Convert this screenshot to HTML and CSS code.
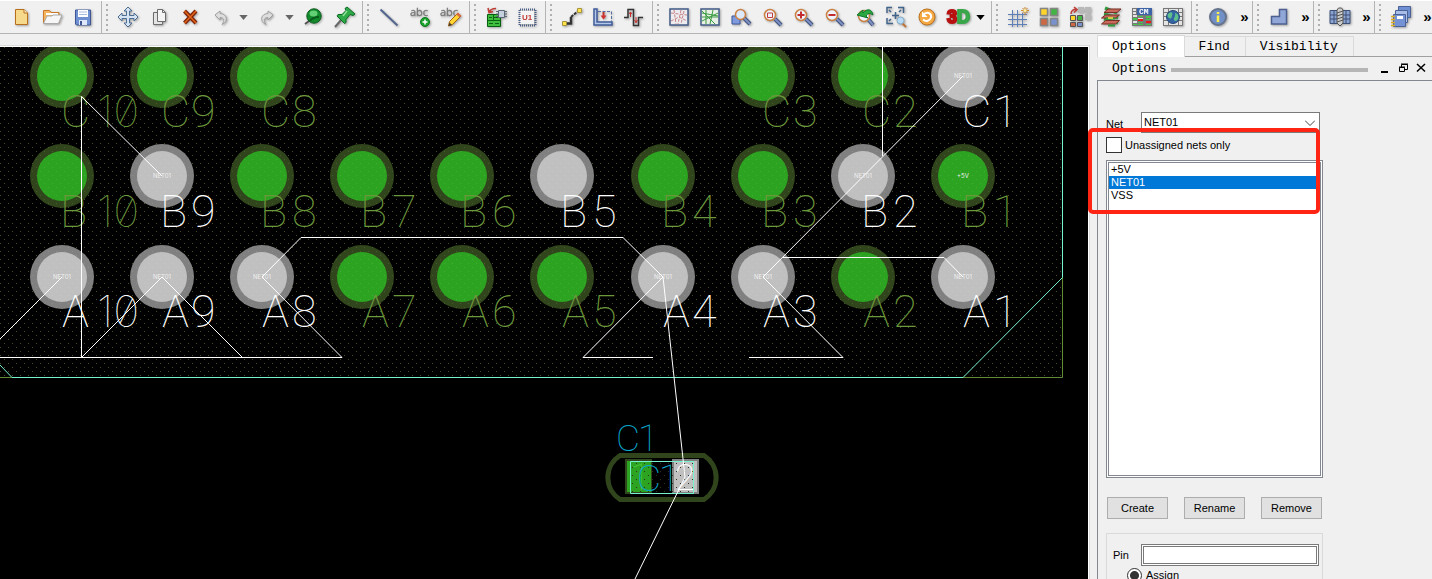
FILE: index.html
```html
<!DOCTYPE html>
<html lang="en">
<head>
<meta charset="utf-8">
<title>PCB Editor</title>
<link rel="stylesheet" href="styles.css">
</head>
<body>
<div class="toolbar" role="toolbar">
  <div class="group first">
    <button class="tool" aria-label="New"><svg viewBox="0 0 24 24"><path d="M6.500 4.500h8.500l3.500 3.500v11.500h-12z" fill="#f7d98b" stroke="#b86f1c"/><path d="M15 4.500v3.500h3.500" fill="#fff3cf" stroke="#b86f1c"/></svg></button>
    <button class="tool" aria-label="Open"><svg viewBox="0 0 24 24"><path d="M3.500 18V5.500h6l1.500 2h8v10.500z" fill="#f5b560" stroke="#c87a2a"/><path d="M6 9h12" stroke="#fff" stroke-width="2"/><path d="M7 11h5l1-1h9l-3.500 8.500h-15z" fill="#f6f6f6" stroke="#a9a9a9"/></svg></button>
    <button class="tool" aria-label="Save"><svg viewBox="0 0 24 24"><path d="M4.500 5h15v15h-14l-1-1z" fill="#6e8fd0" stroke="#3e5695"/><path d="M7 5h10v7H7z" fill="#fff"/><path d="M8 7h8M8 9.500h8" stroke="#a9bde2"/><path d="M8 15h8v5H8z" fill="#dfe8fa"/><path d="M9 16h2v4H9z" fill="#3e5695"/></svg></button>
  </div>
  <div class="group">
    <i class="grip"></i>
    <button class="tool" aria-label="Move"><svg viewBox="0 0 24 24"><path d="M12 2l4 4h-2.500v4.500H18V8l4 4-4 4v-2.500h-4.500V18H16l-4 4-4-4h2.500v-4.500H6V16l-4-4 4-4v2.500h4.500V6H8z" fill="#d5e3f2" stroke="#4e6d92"/></svg></button>
    <button class="tool" aria-label="Copy"><svg viewBox="0 0 24 24"><path d="M6.500 7.500h6l3 3v9h-9z" fill="#e4e4e4" stroke="#6d6d6d"/><path d="M10.500 4.500h5l3 3v9h-8z" fill="#f4f4f4" stroke="#6d6d6d"/><path d="M15.500 4.500v3h3" stroke="#6d6d6d"/></svg></button>
    <button class="tool" aria-label="Delete"><svg viewBox="0 0 24 24"><path d="M6.500 6L18 18M18 6L6.500 18" stroke="#7e2408" stroke-width="4"/><path d="M6.500 6L18 18M18 6L6.500 18" stroke="#e3661d" stroke-width="1.500"/></svg></button>
    <button class="tool" aria-label="Undo"><svg viewBox="0 0 24 24"><path d="M6 10l5-4v2.500c7 0 9 8 2 11 3-4 2-7-2-7V15z" fill="#ddd" stroke="#a0a0a0"/></svg></button>
    <button class="drop" aria-label="Undo list"><svg viewBox="0 0 10 6"><path d="M0 0h10L5 6z" fill="#666"/></svg></button>
    <button class="tool" aria-label="Redo"><svg viewBox="0 0 24 24"><path d="M18 10l-5-4v2.500c-7 0-9 8-2 11-3-4-2-7 2-7V15z" fill="#ddd" stroke="#a0a0a0"/></svg></button>
    <button class="drop" aria-label="Redo list"><svg viewBox="0 0 10 6"><path d="M0 0h10L5 6z" fill="#666"/></svg></button>
    <button class="tool" aria-label="Pin view"><svg viewBox="0 0 24 24"><path d="M8 16l-4 3" stroke="#555" stroke-width="2"/><circle cx="13" cy="11" r="7.200" fill="#128a2c" stroke="#0b5b1c"/><path d="M9 16c2-3 5-4 9-4" stroke="#0a5a1b" stroke-width="2"/><ellipse cx="12.500" cy="8.500" rx="4" ry="3" fill="#63cf74"/></svg></button>
    <button class="tool" aria-label="Unpin"><svg viewBox="0 0 24 24"><path d="M10 14l-7 8" stroke="#666" stroke-width="2"/><path d="M15 2l8 7-2 1.500-3-1-4 5v3l-1.500 1L5 11l1-1.500h4l4-4-1-2z" fill="#2eaa48" stroke="#0b6a22"/><path d="M15 6l-4 5" stroke="#8fe09b" stroke-width="1.500"/></svg></button>
  </div>
  <div class="group">
    <i class="grip"></i>
    <button class="tool" aria-label="Line"><svg viewBox="0 0 24 24"><path d="M3.500 4.500l17 16" stroke="#53658e" stroke-width="2"/></svg></button>
    <button class="tool" aria-label="Add text"><svg viewBox="0 0 24 24"><text x="2" y="11" class="abc">abc</text><circle cx="17" cy="17" r="4.500" fill="#18a12b" stroke="#0c7a1c"/><path d="M14.500 17h5M17 14.500v5" stroke="#fff" stroke-width="1.500"/></svg></button>
    <button class="tool" aria-label="Edit text"><svg viewBox="0 0 24 24"><text x="1" y="11" class="abc">abc</text><path d="M9.500 21l1-4.500L19 8l3 3-8.500 8.500z" fill="#ffd433" stroke="#a46210"/><path d="M18 8.500l3.500 3" stroke="#dc6c43" stroke-width="2.500"/><path d="M9.500 21l1-3.500 2.500 2.500z" fill="#44362b"/></svg></button>
  </div>
  <div class="group">
    <i class="grip"></i>
    <button class="tool" aria-label="Place manual"><svg viewBox="0 0 24 24"><path d="M3.500 9.500h13v12h-13z" fill="#3fbf3d" stroke="#075f11"/><path d="M4 15.500h12M5 12.500h3M10 12.500h5M5 18.500h4M11 18.500h4M9.500 10v5" stroke="#0b6314"/><path d="M14.500 5.500h6v7h-6z" fill="#c5d0df" stroke="#596675"/><path d="M12 6.500h2M12 9h2M12 11.500h2M21 6.500h2M21 9h2M21 11.500h2" stroke="#596675"/><path d="M12 3.500c-4 0-6 1-7 4M4 3l1 4.500 4-1" stroke="#c23b35" stroke-width="1.500"/></svg></button>
    <button class="tool" aria-label="Component"><svg viewBox="0 0 24 24"><rect x="5" y="6" width="14" height="13" fill="#f4f4f4"/><path d="M5 4.500h15M5 20.500h15" stroke="#485c85" stroke-width="2" stroke-dasharray="1 1"/><path d="M4.500 5v15M20.500 5v15" stroke="#485c85" stroke-width="2" stroke-dasharray="1 1"/><text x="7" y="15" class="chip">U1</text></svg></button>
  </div>
  <div class="group">
    <i class="grip"></i>
    <button class="tool" aria-label="Add connect"><svg viewBox="0 0 24 24"><path d="M5 18.500h6V12" stroke="#333" stroke-width="2.500"/><path d="M11 12l7-6" stroke="#333" stroke-width="2" stroke-dasharray="3 1"/><path d="M2.500 16.500h4v4h-4zM17.500 3.500h4v4h-4z" fill="#ffe34b" stroke="#a7943d"/></svg></button>
    <button class="tool" aria-label="Slide"><svg viewBox="0 0 24 24"><path d="M7 6.500h13.500v10" stroke="#516d9f" stroke-dasharray="3 1.500"/><path d="M3 4h3v13h15v3H3z" fill="#b6c8ea" stroke="#3f5b9b" stroke-width="1.500"/><path d="M12.500 7v5" stroke="#c53430" stroke-width="2"/><path d="M9.500 10.500h6l-3 4z" fill="#d2322e"/></svg></button>
    <button class="tool" aria-label="Delay tune"><svg viewBox="0 0 24 24"><path d="M2 12.500h4v-8h5.500v16h5v-8H21" stroke="#333" stroke-width="1.500"/><path d="M8.500 7v5M14 12v6M7 9l1.500-2L10 9M12.500 15l1.500 2.500 1.500-2.500" stroke="#c4322e"/></svg></button>
  </div>
  <div class="group">
    <i class="grip"></i>
    <button class="tool" aria-label="Unrats all"><svg viewBox="0 0 24 24"><rect x="3" y="4" width="18" height="16" fill="#ececf0" stroke="#425b86" stroke-width="1.500"/><path d="M4 8l16 2M4 16l8-4 8 4M7 5l2 14M14 5l-3 14M17 6l-3 13" stroke="#c98384" stroke-dasharray="3 1.500"/></svg></button>
    <button class="tool" aria-label="Rats all"><svg viewBox="0 0 24 24"><rect x="3" y="4" width="18" height="16" fill="#e8f0e6" stroke="#425b86" stroke-width="1.500"/><path d="M4 8l16 3M4 16l16-8M4 12h16M8 5v14M15 5l-3 14M4 6l13 13" stroke="#3a9c40"/></svg></button>
    <button class="tool" aria-label="Zoom points"><svg viewBox="0 0 24 24"><path d="M3 11h8v8H3z" fill="#7e9be0" stroke="#3e5798"/><path d="M15 13l6 6" stroke="#41527e" stroke-width="4"/><path d="M15 13l6 6" stroke="#7d91c3" stroke-width="2"/><circle cx="11.500" cy="9.500" r="5" fill="#dce9fb" stroke="#ca8142" stroke-width="1.500"/></svg></button>
    <button class="tool" aria-label="Zoom fit"><svg viewBox="0 0 24 24"><path d="M15 14l6 6" stroke="#41527e" stroke-width="4"/><path d="M15 14l6 6" stroke="#7d91c3" stroke-width="2"/><circle cx="10" cy="10" r="5.500" fill="#edf4ff" stroke="#ca8142" stroke-width="1.500"/><path d="M7.500 8h5v4.500h-5z" stroke="#c53a3a"/></svg></button>
    <button class="tool" aria-label="Zoom in"><svg viewBox="0 0 24 24"><path d="M15 14l6 6" stroke="#41527e" stroke-width="4"/><path d="M15 14l6 6" stroke="#7d91c3" stroke-width="2"/><circle cx="10" cy="10" r="5.500" fill="#edf4ff" stroke="#ca8142" stroke-width="1.500"/><path d="M6.500 10h7M10 6.500v7" stroke="#c42d2d" stroke-width="2"/></svg></button>
    <button class="tool" aria-label="Zoom out"><svg viewBox="0 0 24 24"><path d="M15 14l6 6" stroke="#41527e" stroke-width="4"/><path d="M15 14l6 6" stroke="#7d91c3" stroke-width="2"/><circle cx="10" cy="10" r="5.500" fill="#edf4ff" stroke="#ca8142" stroke-width="1.500"/><path d="M6.500 10h7" stroke="#c42d2d" stroke-width="2"/></svg></button>
    <button class="tool" aria-label="Zoom previous"><svg viewBox="0 0 24 24"><path d="M15 14l5 6" stroke="#41527e" stroke-width="4"/><path d="M15 14l5 6" stroke="#7d91c3" stroke-width="2"/><circle cx="11" cy="11" r="5.500" fill="#edf4ff" stroke="#ca8142" stroke-width="1.500"/><path d="M4 10l6-5v3c4-5 9-4 10 2-3-2-5-2-7 1l2 2z" fill="#2aa842" stroke="#0f7527"/></svg></button>
    <button class="tool" aria-label="Zoom center"><svg viewBox="0 0 24 24"><path d="M3 8V2.500h5M14 2.500h5.500V8M3 13v5.500h6M8 10.500h7M11.500 7v7M5 5l2 2M17 5l-2 2M5 16l2-2" stroke="#41648b" stroke-width="1.500"/><path d="M18 18l4 4" stroke="#bd7337" stroke-width="2"/><circle cx="16.500" cy="15.500" r="3.500" fill="#b8dcf5" stroke="#87aac6"/></svg></button>
    <button class="tool" aria-label="Refresh"><svg viewBox="0 0 24 24"><circle cx="12" cy="12" r="8" fill="#f5a943" stroke="#bb701f"/><path d="M9 9c4-3 8 0 7 3.500s-5 4.500-8 2" stroke="#fff" stroke-width="2"/><path d="M7 6.500v5.500h5.500z" fill="#fff"/></svg></button>
    <button class="tool" aria-label="3D view"><svg viewBox="0 0 24 24"><text x="1" y="18" class="three-d"><tspan class="red">3</tspan><tspan class="green">D</tspan></text></svg></button>
    <button class="drop" aria-label="3D options"><svg viewBox="0 0 10 6"><path d="M0 0h10L5 6z" fill="#000"/></svg></button>
  </div>
  <div class="group">
    <i class="grip"></i>
    <button class="tool" aria-label="Grid"><svg viewBox="0 0 24 24"><path d="M2 9.500h19M2 14.500h19M2 19.500h19M6.500 5v17M11.500 5v17M16.500 8v14" stroke="#5f7fb8"/><path d="M19 2v8M15 5.500h8M16.500 3l5 5M21.500 3l-5 5" stroke="#d08a32"/><circle cx="19" cy="5.500" r="1.500" fill="#fff2a0"/></svg></button>
    <button class="tool" aria-label="Colors"><svg viewBox="0 0 24 24"><g stroke="#858585" stroke-width="1.500"><path d="M3.500 3.500h7v7h-7z" fill="#ffd42b"/><path d="M13.500 3.500h7v7h-7z" fill="#44b444"/><path d="M3.500 13.500h7v7h-7z" fill="#cc6842"/><path d="M13.500 13.500h7v7h-7z" fill="#7991cd"/></g></svg></button>
    <button class="tool" aria-label="Color swap"><svg viewBox="0 0 24 24"><path d="M10 2h6v6h-6zM17 2h6v6h-6zM17 9h6v6h-6z" fill="#b8b8b8"/><g stroke="#555"><path d="M2.500 10.500h5v5h-5z" fill="#ffd42b"/><path d="M9.500 10.500h5v5h-5z" fill="#44b444"/><path d="M2.500 17.500h5v4h-5z" fill="#cc6842"/><path d="M9.500 17.500h5v4h-5z" fill="#7991cd"/></g><path d="M3 9c0-4 3-5 6-4.500M6 2l3 2.500-3 3" stroke="#c03c34" stroke-width="1.500"/></svg></button>
    <button class="tool" aria-label="Layers"><svg viewBox="0 0 24 24"><path d="M6 3l12 5M5 9l14 4M5 14l14 4" stroke="#2f9a3c" stroke-width="3"/><g fill="#c9695c" stroke="#7a3027"><path d="M5 7.500l4-3.500h13l-4 3.500z"/><path d="M2.500 13l4-3h14l-4 3z"/><path d="M2.500 19l4-3.500h14l-4 3.500z"/></g><path d="M7 13.500h9M9 20.500h7" stroke="#2f9a3c" stroke-width="2"/><path d="M9 13h5" stroke="#ffe34d" stroke-width="1.500"/></svg></button>
    <button class="tool" aria-label="Constraint manager"><svg viewBox="0 0 24 24"><path d="M2 3h20v18H2z" fill="#777"/><path d="M7 3h15v7H7z" fill="#3d64a6"/><text x="9" y="9" class="cm">CM</text><path d="M3 4h3v2H3zM3 7h3v2H3zM3 10h4v2H3zM3 16h4v2H3zM8 13h5v1H8z" fill="#e4e4e4"/><path d="M8 11h5v1H8zM16 11h5v2h-5zM8 17h5v1H8zM8 19h5v1H8zM16 14h5v1h-5zM16 19h5v1h-5zM3 19h4v1H3zM3 13h4v2H3z" fill="#45c94b"/><path d="M8 14h5v2H8zM16 16h5v2h-5z" fill="#f01818"/></svg></button>
    <button class="tool" aria-label="World"><svg viewBox="0 0 24 24"><path d="M2 3h20v18H2z" fill="#e4e4e4"/><path d="M2 3.500h20M2 7.500h20M2 11.500h20M2 15.500h20M2 20.500h20M2.500 3v18M7.500 3v18M17.500 3v18M21.500 3v18" stroke="#777"/><circle cx="12" cy="12" r="6.500" fill="#3464a4" stroke="#244a76"/><path d="M8 8c3-2 4 0 3 3s-1 3-3 2-2-3 0-5zM14 8c3 0 4 4 3 6s-3 3-4 1 2-3 1-7z" fill="#5fc18a"/></svg></button>
  </div>
  <div class="group">
    <i class="grip"></i>
    <button class="tool" aria-label="Info"><svg viewBox="0 0 24 24"><circle cx="12" cy="12" r="8" fill="#7190c8" stroke="#66738c" stroke-width="2"/><path d="M12 7v2M12 10.500v6.500" stroke="#fff04a" stroke-width="2.500"/></svg></button>
    <button class="more" aria-label="More">»</button>
  </div>
  <div class="group">
    <i class="grip"></i>
    <button class="tool" aria-label="Shape"><svg viewBox="0 0 24 24"><path d="M4.500 19v-7.500h8v-7h7V19z" fill="#91a7d8" stroke="#4d6090" stroke-width="1.500"/></svg></button>
    <button class="more" aria-label="More">»</button>
  </div>
  <div class="group">
    <i class="grip"></i>
    <button class="tool" aria-label="Drill"><svg viewBox="0 0 24 24"><path d="M2 5.500h20v13H2z" fill="#8ba3cf" stroke="#3c5078"/><path d="M2 10h20M2 14h20M6 6v12M18 6v12" stroke="#3c5078"/><path d="M9 5l1.500-2h3L15 5v13l-3 3-3-3z" fill="#ccc" stroke="#555"/><path d="M9 8l6-2M9 11l6-2M9 14l6-2M9 17l6-2" stroke="#555"/></svg></button>
    <button class="more" aria-label="More">»</button>
  </div>
  <div class="group last">
    <i class="grip"></i>
    <button class="tool" aria-label="Reports"><svg viewBox="0 0 24 24"><g stroke="#4a6296"><path d="M9.500 1.500h12v11h-12z" fill="#6f8fd3"/><path d="M6.500 5.500h12v12h-12z" fill="#a9bde8"/><path d="M4.500 9.500h12v12h-12z" fill="#7492d4"/></g><path d="M8 11h6v3H8z" fill="#fff"/><path d="M2 11.500h4M2 14.500h4M2 17.500h4M2 20.500h4" stroke="#e0ae20" stroke-width="1.500"/></svg></button>
    <button class="more" aria-label="More">»</button>
  </div>
</div>

<main class="work">
  <div class="board">
    <svg class="pcb" role="img" aria-label="Board layout">
      <defs>
        <pattern id="dots" width="8" height="8" patternUnits="userSpaceOnUse"><path d="M0 3h1v1H0zM4 7h1v1H4z" class="dot"/></pattern>
        <pattern id="lit" width="8" height="8" patternUnits="userSpaceOnUse"><path d="M0 3h1v1H0zM4 7h1v1H4z" class="glint"/></pattern>
        <g id="g"><circle r="32" class="ring"/><circle r="25" class="pad"/></g>
        <g id="w"><circle r="32" class="ring-hi"/><circle r="25" class="pad-hi"/></g>
        <g id="n"><use href="#w"/><text y="2" class="net">NET01</text></g>
      </defs>
      <g transform="translate(0 -47)">
        <path d="M0 47H1062V377H0z" fill="url(#dots)"/>
        <use href="#g" x="62" y="76"/><use href="#g" x="162" y="76"/><use href="#g" x="262" y="76"/><use href="#g" x="763" y="76"/><use href="#g" x="863" y="76"/><use href="#n" x="963" y="76"/>
        <use href="#g" x="62" y="176"/><use href="#n" x="162" y="176"/><use href="#g" x="262" y="176"/><use href="#g" x="362" y="176"/><use href="#g" x="462" y="176"/><use href="#w" x="562" y="176"/><use href="#g" x="663" y="176"/><use href="#g" x="763" y="176"/><use href="#n" x="863" y="176"/><use href="#g" x="963" y="176"/>
        <text x="963" y="178" class="net">+5V</text>
        <use href="#n" x="62" y="277"/><use href="#n" x="162" y="277"/><use href="#n" x="262" y="277"/><use href="#g" x="362" y="277"/><use href="#g" x="462" y="277"/><use href="#g" x="562" y="277"/><use href="#n" x="663" y="277"/><use href="#n" x="763" y="277"/><use href="#g" x="863" y="277"/><use href="#n" x="963" y="277"/>
        <path d="M0 47H1062V377H0z" fill="url(#lit)"/>

        <g class="label">
          <text x="61" y="127">C</text><text x="97" y="127" class="ten">10</text>
          <text x="161" y="127">C</text><text x="191" y="127">9</text>
          <text x="261" y="127">C</text><text x="292" y="127">8</text>
          <text x="762" y="127">C</text><text x="793" y="127">3</text>
          <text x="862" y="127">C</text><text x="893" y="127">2</text>
          <text x="60" y="227">B</text><text x="97" y="227" class="ten">10</text>
          <text x="260" y="227">B</text><text x="292" y="227">8</text>
          <text x="360" y="227">B</text><text x="392" y="227">7</text>
          <text x="460" y="227">B</text><text x="492" y="227">6</text>
          <text x="661" y="227">B</text><text x="692" y="227">4</text>
          <text x="761" y="227">B</text><text x="793" y="227">3</text>
          <text x="961" y="227">B</text><text x="993" y="227">1</text>
          <text x="362" y="327">A</text><text x="392" y="327">7</text>
          <text x="462" y="327">A</text><text x="492" y="327">6</text>
          <text x="562" y="327">A</text><text x="592" y="327">5</text>
          <text x="863" y="327">A</text><text x="893" y="327">2</text>
        </g>
        <g class="label hi">
          <text x="962" y="127">C</text><text x="993" y="127">1</text>
          <text x="160" y="227">B</text><text x="191" y="227">9</text>
          <text x="560" y="227">B</text><text x="592" y="227">5</text>
          <text x="861" y="227">B</text><text x="893" y="227">2</text>
          <text x="62" y="327">A</text><text x="97" y="327" class="ten">10</text>
          <text x="162" y="327">A</text><text x="191" y="327">9</text>
          <text x="262" y="327">A</text><text x="292" y="327">8</text>
          <text x="663" y="327">A</text><text x="692" y="327">4</text>
          <text x="763" y="327">A</text><text x="793" y="327">3</text>
          <text x="963" y="327">A</text><text x="993" y="327">1</text>
        </g>

        <path class="edge" d="M1062.500 277V377.500H963M12 377.500H0"/>
        <path class="outline" d="M1062.500 47V277.500L963 377.500H12L0 365"/>

        <path class="shell" d="M620 455.500H704A26 26 0 0 1 704 499.500H620A26 26 0 0 1 620 455.500z"/>
        <path class="ring" d="M625 459h27v35h-27z"/><path class="pad" d="M627 461h24v31h-24z"/>
        <path class="ring-hi" d="M672 459h27v35h-27z"/><path class="pad-hi" d="M674 461h23v31h-23z"/>
        <path d="M630 461h63v32h-63z" fill="url(#dots)"/>
        <g class="label small">
          <text x="630" y="490" class="one">1</text>
          <text x="616" y="451">C</text><text x="638" y="451">1</text>
          <text x="637" y="491">C</text><text x="659" y="491">1</text>
          <text x="675" y="490" class="two">2</text>
        </g>
        <path class="outline" d="M630.500 461.500h63v32h-63z"/>
        <path class="rats" d="M81.500 357V96.500L162 176M62 277L0 339M0 357.500H342L262 277L301 237.500H623L663 277L583 357.500H653M82 357L162 277L242 357M663 277L685 477L635 579M763 277L843 357.500H749M783 257.500H944L963 277M763 277L963 76M882.500 47V156"/>
      </g>
    </svg>
  </div>

  <aside class="side">
    <nav class="tabs" role="tablist">
      <button class="tab active" role="tab">Options</button>
      <button class="tab" role="tab">Find</button>
      <button class="tab" role="tab">Visibility</button>
    </nav>
    <header class="dock">
      <h2 class="dock-title">Options</h2>
      <span class="dock-bar"></span>
      <button class="win" aria-label="Minimize"><svg viewBox="0 0 12 12"><path d="M2 9h7" stroke="#000" stroke-width="2"/></svg></button>
      <button class="win" aria-label="Restore"><svg viewBox="0 0 12 12"><path d="M4.500 4V1.500h6v5H8M2.500 4.500h5v4h-5zM4 1h7M2 4h6" stroke="#000"/></svg></button>
      <button class="win" aria-label="Close"><svg viewBox="0 0 12 12"><path d="M2 1l8 7.500M10 1L2 8.500" stroke="#000" stroke-width="1.500"/></svg></button>
    </header>
    <form class="pane">
      <div class="field net-row">
        <label for="net">Net</label>
        <div class="combo">
          <select id="net"><option>NET01</option></select>
          <svg class="chev" viewBox="0 0 10 6"><path d="M0 0.500l5 5 5-5" stroke="#444" fill="none"/></svg>
        </div>
      </div>
      <label class="check"><input type="checkbox">Unassigned nets only</label>
      <select class="list" size="3" aria-label="Nets">
        <option>+5V</option>
        <option selected>NET01</option>
        <option>VSS</option>
      </select>
      <div class="actions">
        <button type="button">Create</button>
        <button type="button">Rename</button>
        <button type="button">Remove</button>
      </div>
      <div class="pin-box">
        <div class="field">
          <label for="pin">Pin</label>
          <input id="pin" class="pin" type="text">
        </div>
        <label class="radio"><input type="radio" name="mode" checked>Assign</label>
      </div>
      <span class="marker"></span>
    </form>
  </aside>
</main>
</body>
</html>
```

FILE: styles.css
```css
* { box-sizing: border-box; }

body {
  margin: 0;
  height: 100vh;
  display: flex;
  flex-direction: column;
  overflow: hidden;
  background: #f0f0f0;
  color: #000;
  font: 11px/13px "Liberation Sans", Arial, sans-serif;
}

button, input, select { font: inherit; color: inherit; }
svg { display: block; }

/* Toolbar */
.toolbar {
  display: flex;
  flex: none;
  border-top: 1px solid #fff;
  border-bottom: 1px solid #b4b4b4;
}
.group {
  display: flex;
  align-items: center;
  flex: none;
  height: 32px;
  padding-right: 3px;
  border-right: 1px solid #b4b4b4;
}
.group.first { padding-left: 5px; }
.group.last { border-right: 0; }
.group:has(.more) { padding-right: 0; }
.grip {
  width: 2px;
  height: 27px;
  margin: 0 4px;
  background: repeating-linear-gradient(#b0b0b0 0 2px, transparent 2px 5px);
}
.tool, .drop, .more {
  display: flex;
  align-items: center;
  justify-content: center;
  height: 32px;
  padding: 0;
  border: 0;
  background: none;
}
.tool { width: 31px; }
.tool svg {
  width: 24px;
  height: 24px;
  overflow: visible;
  filter: drop-shadow(1px 1px 1px #0005);
}
.tool path:not([fill]), .win path { fill: none; }
.tool g[fill] path { fill: inherit; }
.drop { width: 15px; }
.drop svg { width: 9px; height: 5px; }
.more {
  width: 19px;
  padding: 0 0 1px 4px;
  font: bold 15px/30px "Liberation Sans", Arial, sans-serif;
}
.abc { font: 11px "Open Sans", sans-serif; fill: #777; stroke: #777; stroke-width: 0.300; }
.chip { font: bold 8px "Liberation Sans", sans-serif; fill: #c23a38; }
.cm { font: bold 8px "Liberation Mono", monospace; fill: #fff; }
.three-d { font: bold 18px "Liberation Sans", sans-serif; stroke-width: 2; }
.red { fill: #d11a1a; stroke: #b81010; }
.green { fill: #43b555; stroke: #37a548; }

/* Work area */
.work { display: flex; flex: 1; min-height: 0; }
.board {
  flex: 1;
  min-width: 0;
  margin-top: 11px;
  border-top: 1px solid #dadada;
  border-right: 1px solid #dadada;
}
.pcb {
  width: 100%;
  height: 100%;
  background: #000;
  border-top: 1px solid #fff;
  border-right: 1px solid #fff;
}
.dot { fill: #2a341a; }
.glint { fill: #e8ffb0; fill-opacity: 0.120; }
.ring { fill: #31451c; }
.pad { fill: #2ca321; }
.ring-hi { fill: #808080; }
.pad-hi { fill: #c0c0c0; }
.net { font: 6px Inter, sans-serif; fill: #f0f0f0; text-anchor: middle; }
.label {
  font: 100 45px Roboto, Inter, sans-serif;
  font-feature-settings: "zero" 1;
  fill: #6c983c;
}
.label .ten { font-family: Inter, sans-serif; font-size: 44px; }
.label.hi { fill: #fff; }
.label.small { font-size: 37px; fill: #0aa6cc; }
.label .one { fill: #45c334; }
.label .two { fill: #fff; }
.outline, .edge, .rats, .shell { fill: none; }
.outline { stroke: #76f2cf; }
.edge { stroke: #628a36; }
.rats { stroke: #fff; }
.shell { stroke: #31451c; stroke-width: 5; }

/* Side panel */
.side {
  display: flex;
  flex-direction: column;
  flex: none;
  width: 342px;
  padding-left: 7px;
}
.tabs {
  display: flex;
  align-items: flex-end;
  height: 23px;
  border-bottom: 1px solid #a0a0a0;
}
.tab {
  height: 20px;
  padding: 0 15px 0 14px;
  border: 1px solid #dadada;
  border-width: 1px 1px 0 0;
  background: #f0f0f0;
  font: 13px/18px "Liberation Mono", "Courier New", monospace;
}
.tab.active {
  height: 22px;
  margin-bottom: -1px;
  padding: 0 17px 0 14px;
  border-left-width: 1px;
  background: #fff;
}
.dock {
  display: flex;
  align-items: center;
  height: 23px;
  padding: 0 2px 0 15px;
}
.dock-title {
  margin: 0;
  font: 13px/16px "Liberation Mono", "Courier New", monospace;
}
.dock-bar {
  flex: 1;
  height: 4px;
  margin: 2px 8px 0 4px;
  background: #b6b6b6;
}
.win {
  width: 18px;
  height: 18px;
  padding: 3px;
  border: 0;
  background: none;
}
.win svg { width: 12px; height: 12px; }

.pane {
  position: relative;
  flex: 1;
  min-height: 0;
  padding: 31px 0 0 8px;
  border: 1px solid #828790;
  border-width: 1px 0 0 1px;
}
.field { display: flex; align-items: center; }
.net-row { width: 214px; }
.net-row label { width: 35px; padding-top: 4px; }
.combo { position: relative; flex: 1; }
.combo select {
  display: block;
  width: 100%;
  height: 21px;
  padding: 0 2px;
  border: 1px solid #7a7a7a;
  border-radius: 0;
  background: #fff;
  appearance: none;
}
.chev { position: absolute; right: 5px; top: 8px; width: 10px; height: 6px; }
.check { display: flex; align-items: center; width: 216px; height: 24px; gap: 3px; }
.check input {
  width: 16px;
  height: 16px;
  margin: 0;
  border: 1px solid #333;
  background: #fff;
  appearance: none;
}
.list {
  display: block;
  width: 217px;
  height: 318px;
  margin-top: 3px;
  padding: 0;
  border: 3px double #828790;
  border-radius: 0;
  background: #fff;
  overflow: hidden;
  outline: 0;
}
.list option {
  min-height: 13px;
  height: 13px;
  padding: 0 2px;
  line-height: 13px;
  color: #000;
}
.list option:checked {
  background: linear-gradient(#0078d7, #0078d7);
  color: #fff;
}
.actions { display: flex; gap: 16px; padding: 19px 0 14px 1px; }
.actions button {
  width: 61px;
  height: 22px;
  padding: 0;
  border: 1px solid #adadad;
  background: #e1e1e1;
}
.pin-box {
  width: 217px;
  padding: 10px 3px 8px 6px;
  border: 1px solid #dadada;
}
.pin-box .field label { width: 28px; }
.pin {
  flex: 1;
  min-width: 0;
  height: 22px;
  border: 3px double #7a7a7a;
  background: #fff;
}
.radio { display: flex; align-items: center; gap: 4px; padding: 2px 0 0 14px; }
.radio input {
  width: 15px;
  height: 15px;
  margin: 0;
  border: 1px solid #333;
  border-radius: 50%;
  background: radial-gradient(circle, #333 0 4px, #fff 5px);
  appearance: none;
}
.marker {
  position: absolute;
  left: -10px;
  top: 47px;
  width: 232px;
  height: 86px;
  border: 4px solid #ff2414;
  border-radius: 5px;
  pointer-events: none;
}
```
